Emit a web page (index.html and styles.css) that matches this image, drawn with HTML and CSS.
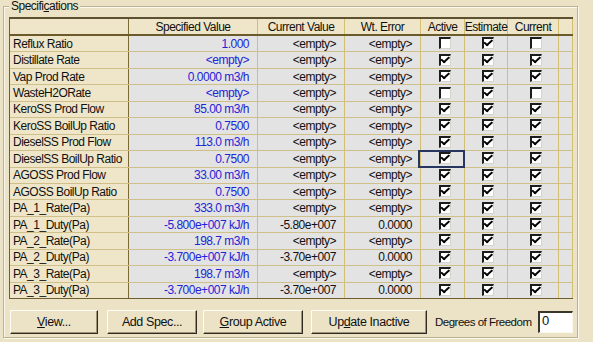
FILE: index.html
```html
<!DOCTYPE html>
<html lang="en">
  <head>
    <meta charset="UTF-8" />
    <title>Specifications</title>
    <link rel="stylesheet" href="styles.css">
  </head>
  <body>
    <div class="group">
      <span class="group-title">Specifi<u>c</u>ations</span>
      <div class="grid">
        <div class="row head">
          <div class="cell name"></div>
          <div class="cell spec">Specified Value</div>
          <div class="cell cur">Current Value</div>
          <div class="cell err">Wt. Error</div>
          <div class="cell act">Active</div>
          <div class="cell est">Estimate</div>
          <div class="cell now">Current</div>
          <div class="cell pad"></div>
        </div>
        <div class="row">
          <div class="cell name">Reflux Ratio</div>
          <div class="cell spec">1.000</div>
          <div class="cell cur">&lt;empty&gt;</div>
          <div class="cell err">&lt;empty&gt;</div>
          <div class="cell act"><span class="cb"></span></div>
          <div class="cell est"><span class="cb on"></span></div>
          <div class="cell now"><span class="cb"></span></div>
          <div class="cell pad"></div>
        </div>
        <div class="row">
          <div class="cell name">Distillate Rate</div>
          <div class="cell spec">&lt;empty&gt;</div>
          <div class="cell cur">&lt;empty&gt;</div>
          <div class="cell err">&lt;empty&gt;</div>
          <div class="cell act"><span class="cb on"></span></div>
          <div class="cell est"><span class="cb on"></span></div>
          <div class="cell now"><span class="cb on"></span></div>
          <div class="cell pad"></div>
        </div>
        <div class="row">
          <div class="cell name">Vap Prod Rate</div>
          <div class="cell spec">0.0000 m3/h</div>
          <div class="cell cur">&lt;empty&gt;</div>
          <div class="cell err">&lt;empty&gt;</div>
          <div class="cell act"><span class="cb on"></span></div>
          <div class="cell est"><span class="cb on"></span></div>
          <div class="cell now"><span class="cb on"></span></div>
          <div class="cell pad"></div>
        </div>
        <div class="row">
          <div class="cell name">WasteH2ORate</div>
          <div class="cell spec">&lt;empty&gt;</div>
          <div class="cell cur">&lt;empty&gt;</div>
          <div class="cell err">&lt;empty&gt;</div>
          <div class="cell act"><span class="cb"></span></div>
          <div class="cell est"><span class="cb on"></span></div>
          <div class="cell now"><span class="cb"></span></div>
          <div class="cell pad"></div>
        </div>
        <div class="row">
          <div class="cell name">KeroSS Prod Flow</div>
          <div class="cell spec">85.00 m3/h</div>
          <div class="cell cur">&lt;empty&gt;</div>
          <div class="cell err">&lt;empty&gt;</div>
          <div class="cell act"><span class="cb on"></span></div>
          <div class="cell est"><span class="cb on"></span></div>
          <div class="cell now"><span class="cb on"></span></div>
          <div class="cell pad"></div>
        </div>
        <div class="row">
          <div class="cell name">KeroSS BoilUp Ratio</div>
          <div class="cell spec">0.7500</div>
          <div class="cell cur">&lt;empty&gt;</div>
          <div class="cell err">&lt;empty&gt;</div>
          <div class="cell act"><span class="cb on"></span></div>
          <div class="cell est"><span class="cb on"></span></div>
          <div class="cell now"><span class="cb on"></span></div>
          <div class="cell pad"></div>
        </div>
        <div class="row">
          <div class="cell name">DieselSS Prod Flow</div>
          <div class="cell spec">113.0 m3/h</div>
          <div class="cell cur">&lt;empty&gt;</div>
          <div class="cell err">&lt;empty&gt;</div>
          <div class="cell act"><span class="cb on"></span></div>
          <div class="cell est"><span class="cb on"></span></div>
          <div class="cell now"><span class="cb on"></span></div>
          <div class="cell pad"></div>
        </div>
        <div class="row">
          <div class="cell name">DieselSS BoilUp Ratio</div>
          <div class="cell spec">0.7500</div>
          <div class="cell cur">&lt;empty&gt;</div>
          <div class="cell err">&lt;empty&gt;</div>
          <div class="cell act focus"><span class="cb on"></span></div>
          <div class="cell est"><span class="cb on"></span></div>
          <div class="cell now"><span class="cb on"></span></div>
          <div class="cell pad"></div>
        </div>
        <div class="row">
          <div class="cell name">AGOSS Prod Flow</div>
          <div class="cell spec">33.00 m3/h</div>
          <div class="cell cur">&lt;empty&gt;</div>
          <div class="cell err">&lt;empty&gt;</div>
          <div class="cell act"><span class="cb on"></span></div>
          <div class="cell est"><span class="cb on"></span></div>
          <div class="cell now"><span class="cb on"></span></div>
          <div class="cell pad"></div>
        </div>
        <div class="row">
          <div class="cell name">AGOSS BoilUp Ratio</div>
          <div class="cell spec">0.7500</div>
          <div class="cell cur">&lt;empty&gt;</div>
          <div class="cell err">&lt;empty&gt;</div>
          <div class="cell act"><span class="cb on"></span></div>
          <div class="cell est"><span class="cb on"></span></div>
          <div class="cell now"><span class="cb on"></span></div>
          <div class="cell pad"></div>
        </div>
        <div class="row">
          <div class="cell name">PA_1_Rate(Pa)</div>
          <div class="cell spec">333.0 m3/h</div>
          <div class="cell cur">&lt;empty&gt;</div>
          <div class="cell err">&lt;empty&gt;</div>
          <div class="cell act"><span class="cb on"></span></div>
          <div class="cell est"><span class="cb on"></span></div>
          <div class="cell now"><span class="cb on"></span></div>
          <div class="cell pad"></div>
        </div>
        <div class="row">
          <div class="cell name">PA_1_Duty(Pa)</div>
          <div class="cell spec">-5.800e+007 kJ/h</div>
          <div class="cell cur">-5.80e+007</div>
          <div class="cell err">0.0000</div>
          <div class="cell act"><span class="cb on"></span></div>
          <div class="cell est"><span class="cb on"></span></div>
          <div class="cell now"><span class="cb on"></span></div>
          <div class="cell pad"></div>
        </div>
        <div class="row">
          <div class="cell name">PA_2_Rate(Pa)</div>
          <div class="cell spec">198.7 m3/h</div>
          <div class="cell cur">&lt;empty&gt;</div>
          <div class="cell err">&lt;empty&gt;</div>
          <div class="cell act"><span class="cb on"></span></div>
          <div class="cell est"><span class="cb on"></span></div>
          <div class="cell now"><span class="cb on"></span></div>
          <div class="cell pad"></div>
        </div>
        <div class="row">
          <div class="cell name">PA_2_Duty(Pa)</div>
          <div class="cell spec">-3.700e+007 kJ/h</div>
          <div class="cell cur">-3.70e+007</div>
          <div class="cell err">0.0000</div>
          <div class="cell act"><span class="cb on"></span></div>
          <div class="cell est"><span class="cb on"></span></div>
          <div class="cell now"><span class="cb on"></span></div>
          <div class="cell pad"></div>
        </div>
        <div class="row">
          <div class="cell name">PA_3_Rate(Pa)</div>
          <div class="cell spec">198.7 m3/h</div>
          <div class="cell cur">&lt;empty&gt;</div>
          <div class="cell err">&lt;empty&gt;</div>
          <div class="cell act"><span class="cb on"></span></div>
          <div class="cell est"><span class="cb on"></span></div>
          <div class="cell now"><span class="cb on"></span></div>
          <div class="cell pad"></div>
        </div>
        <div class="row">
          <div class="cell name">PA_3_Duty(Pa)</div>
          <div class="cell spec">-3.700e+007 kJ/h</div>
          <div class="cell cur">-3.70e+007</div>
          <div class="cell err">0.0000</div>
          <div class="cell act"><span class="cb on"></span></div>
          <div class="cell est"><span class="cb on"></span></div>
          <div class="cell now"><span class="cb on"></span></div>
          <div class="cell pad"></div>
        </div>
      </div>
      <div class="actions">
        <button class="btn btn-view"><u>V</u>iew...</button>
        <button class="btn btn-add">Add Spec...</button>
        <button class="btn btn-group"><u>G</u>roup Active</button>
        <button class="btn btn-update">Up<u>d</u>ate Inactive</button>
        <span class="dof-label">Degrees of Freedom</span>
        <span class="dof-box">0</span>
      </div>
    </div>
  </body>
</html>
```

FILE: styles.css
```css
* {
  margin: 0;
  padding: 0;
  box-sizing: border-box;
}

body {
  width: 593px;
  height: 342px;
  overflow: hidden;
  background: #ece3c6;
  font-family: "Liberation Sans", Arial, sans-serif;
  font-size: 12px;
  letter-spacing: -0.5px;
  color: #111;
}

.group {
  position: relative;
  width: 575px;
  height: 332px;
  margin: 6px 0 0 3px;
  padding: 10px 0 0 5px;
  border: 1px solid #bdb393;
  box-shadow: inset 1px 1px 0 #fbf8ee, 1px 1px 0 #fbf8ee;
}

.group-title {
  position: absolute;
  top: -8px;
  left: 5px;
  padding: 0 2px;
  background: #ece3c6;
  line-height: 14px;
}

.grid {
  width: 564px;
  border-left: 1px solid #6e5f30;
  border-top: 2px solid #5c5130;
}

.row {
  display: flex;
  height: 16.4375px;
  border-bottom: 1px solid #cfc08a;
}

.row:last-child {
  border-bottom-color: #6e5f30;
}

.row.head {
  height: 17px;
  border-bottom: 2px solid #6b5b2b;
}

.cell {
  display: flex;
  align-items: center;
  justify-content: flex-end;
  height: 100%;
  padding: 0 8px 0 0;
  border-right: 1px solid #d2bf72;
  background: #e3e3e4;
  white-space: nowrap;
}

.cell.name {
  width: 119px;
  padding: 0 0 0 3px;
  justify-content: flex-start;
  background: #efe6c9;
  border-right-color: #7a6a35;
}

.cell.spec {
  width: 129px;
  color: #2424d6;
}

.cell.cur {
  width: 87px;
}

.cell.err {
  width: 76px;
}

.cell.act {
  width: 44px;
}

.cell.est {
  width: 43px;
}

.cell.now {
  width: 51px;
}

.cell.pad {
  width: 14px;
  padding: 0;
}

.cell.act,
.cell.est,
.cell.now {
  justify-content: center;
  padding: 0 0 0 4px;
}

.cell.now {
  padding-left: 6px;
}

.head .cell {
  justify-content: center;
  padding: 0;
  background: #efe6c9;
  color: #111;
}

.cell.focus {
  position: relative;
}

.cell.focus::after {
  content: "";
  position: absolute;
  top: -1px;
  left: -3px;
  right: -1px;
  bottom: -1px;
  border: 2px solid #28365f;
}

.cb {
  position: relative;
  display: block;
  width: 12px;
  height: 12px;
  margin-top: -1px;
  background: #fff;
  border-style: solid;
  border-width: 2px 1px 1px 2px;
  border-color: #1c1c1c #d6d3c8 #d6d3c8 #1c1c1c;
}

.cb.on::after {
  content: "";
  position: absolute;
  left: 1px;
  top: -1px;
  width: 3px;
  height: 6px;
  border-right: 2px solid #000;
  border-bottom: 2px solid #000;
  transform: rotate(40deg) skewX(-8deg);
  transform-origin: 60% 60%;
}

.actions {
  display: flex;
  align-items: center;
  margin: 11px 0 0 1px;
}

.actions > * {
  flex-shrink: 0;
}

.btn {
  height: 24px;
  font-family: inherit;
  font-size: 12.5px;
  letter-spacing: -0.4px;
  color: #111;
  background: #ece3c6;
  border: 1px solid;
  border-color: #fffdf4 #2e2a20 #2e2a20 #fffdf4;
  box-shadow: inset -1px -1px 0 #9c9478;
}

.btn-view {
  width: 88px;
}

.btn-add {
  width: 90px;
  margin-left: 9px;
}

.btn-group {
  width: 100px;
  margin-left: 6px;
}

.btn-update {
  width: 116px;
  margin-left: 8px;
}

.dof-label {
  width: 97px;
  margin-left: 8px;
  font-size: 11.5px;
  white-space: nowrap;
}

.dof-box {
  width: 35px;
  height: 22px;
  margin-left: 6px;
  padding: 0 0 0 2px;
  font-size: 13px;
  line-height: 16px;
  background: #fff;
  border-style: solid;
  border-width: 2px 1px 1px 2px;
  border-color: #3a3628 #fbf8ee #fbf8ee #3a3628;
}
```
